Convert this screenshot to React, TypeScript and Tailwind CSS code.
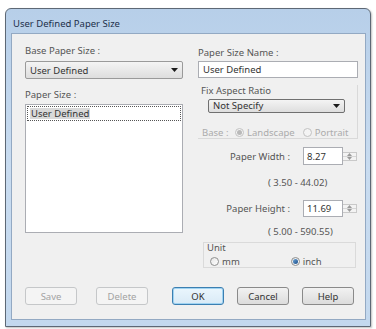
function ComboArrow() {
  return (
    <svg width="7" height="4" viewBox="0 0 7 4" className="shrink-0">
      <path d="M0 0H7L3.5 4Z" fill="#1b1b1b" />
    </svg>
  );
}

function Radio({ checked, disabled }: { checked?: boolean; disabled?: boolean }) {
  return (
    <span
      className={`flex h-[9px] w-[9px] shrink-0 items-center justify-center rounded-full border ${
        disabled ? "border-[#c2c2c2] bg-[#f4f4f4]" : "border-[#8e8f8f] bg-gradient-to-br from-[#e6e6e6] to-white"
      }`}
    >
      {checked && (
        <span
          className={`h-[5px] w-[5px] rounded-full ${
            disabled ? "bg-[#b9b9b9]" : "bg-gradient-to-br from-[#6aa3d6] to-[#1d4f8a]"
          }`}
        />
      )}
    </span>
  );
}

function Spinner() {
  return (
    <div className="flex w-[14px] flex-col border border-l-0 border-[#c9c9c9] bg-[#f3f3f3]">
      <div className="flex flex-1 items-center justify-center border-b border-[#d6d6d6]">
        <svg width="5" height="3" viewBox="0 0 5 3">
          <path d="M0 3L2.5 0L5 3Z" fill="#9a9a9a" />
        </svg>
      </div>
      <div className="flex flex-1 items-center justify-center">
        <svg width="5" height="3" viewBox="0 0 5 3">
          <path d="M0 0H5L2.5 3Z" fill="#9a9a9a" />
        </svg>
      </div>
    </div>
  );
}

function Button({ label, disabled, primary }: { label: string; disabled?: boolean; primary?: boolean }) {
  return (
    <div
      className={`flex h-[18px] w-[52px] items-center justify-center rounded-[3px] border ${
        disabled
          ? "border-[#c5c7c9] bg-[#f4f4f4] text-[#a3a3a3]"
          : primary
            ? "border-[#3c7fb1] bg-gradient-to-b from-[#eaf6fd] to-[#d9eaf6] text-[#333] shadow-[inset_0_0_0_1px_#9fd3f2]"
            : "border-[#8a8a8a] bg-gradient-to-b from-[#f2f2f2] to-[#dcdcdc] text-[#333]"
      }`}
    >
      {label}
    </div>
  );
}

export default function App() {
  return (
    <div className="h-[329px] w-[376px] bg-white font-['Noto_Sans',sans-serif] text-[9.5px] leading-[11px] text-[#555]">
      <div className="pl-[5px] pt-[8px]">
        <div className="flex h-[319px] w-[366px] flex-col rounded-t-[6px] border border-[#5d6875] bg-gradient-to-b from-[#b7cfe9] via-[#c9dcf0] to-[#c3d8ee] pb-[6px] pl-[5px] pr-[4px] shadow-[1px_1px_2px_rgba(0,0,0,0.25)]">
          <div className="flex h-[24px] items-center pl-[2px] pt-[4px] text-[#1c2f4a]">
            User Defined Paper Size
          </div>

          <div className="flex flex-1 flex-col border border-[#93a9c3] bg-[#f0f0f0] pl-[13px] pr-[7px]">
            <div className="flex gap-[15px]">
              {/* left column */}
              <div className="flex w-[158px] flex-col">
                <div className="mt-[11px]">Base Paper Size :</div>
                <div className="mt-[5px] flex h-[18px] items-center justify-between rounded-[2px] border border-[#9a9a9a] bg-gradient-to-b from-[#f4f4f4] to-[#dedede] pl-[4px] pr-[4px] text-[#333]">
                  <span>User Defined</span>
                  <ComboArrow />
                </div>
                <div className="mt-[10px]">Paper Size :</div>
                <div className="mt-[4px] h-[129px] border border-[#abadb3] bg-white px-[1px] pt-[1px]">
                  <div className="flex h-[15px] items-center border border-dotted border-[#555] pl-[2px]">
                    <span className="bg-[#d9d9d9] px-[1px] text-[#333]">User Defined</span>
                  </div>
                </div>
              </div>

              {/* right column */}
              <div className="flex w-[160px] flex-col">
                <div className="mt-[13px]">Paper Size Name :</div>
                <div className="mt-[3px] flex h-[17px] items-center border border-[#abadb3] bg-white pl-[4px] text-[#333]">
                  User Defined
                </div>

                <div className="mt-[7px] flex h-[54px] flex-col border-b border-r border-[#d9d9d9] pl-[10px]">
                  <div className="-ml-[7px]">Fix Aspect Ratio</div>
                  <div className="mt-[3px] flex h-[15px] w-[137px] items-center justify-between rounded-[2px] border border-[#707070] bg-gradient-to-b from-[#f4f4f4] to-[#dedede] pl-[4px] pr-[4px] text-[#333]">
                    <span>Not Specify</span>
                    <ComboArrow />
                  </div>
                  <div className="mt-[14px] flex h-[12px] items-center text-[#ababab]">
                    <span className="-ml-[6px] w-[31px]">Base :</span>
                    <span className="ml-[2px] flex items-center gap-[3px]">
                      <Radio checked disabled />
                      Landscape
                    </span>
                    <span className="ml-[8px] flex items-center gap-[3px]">
                      <Radio disabled />
                      Portrait
                    </span>
                  </div>
                </div>

                <div className="mt-[8px] flex h-[18px] items-center">
                  <span className="w-[92px] text-right">Paper Width :</span>
                  <div className="ml-[13px] flex h-full w-[40px] items-center border border-[#abadb3] bg-white pl-[3px] text-[#333]">
                    8.27
                  </div>
                  <Spinner />
                </div>
                <div className="mt-[12px] pl-[70px]">( 3.50 - 44.02)</div>

                <div className="mt-[12px] flex h-[17px] items-center">
                  <span className="w-[92px] text-right">Paper Height :</span>
                  <div className="ml-[13px] flex h-full w-[40px] items-center border border-[#abadb3] bg-white pl-[3px] text-[#333]">
                    11.69
                  </div>
                  <Spinner />
                </div>
                <div className="mt-[9px] pl-[70px]">( 5.00 - 590.55)</div>

                <div className="ml-[5px] mt-[5px] flex h-[26px] w-[153px] flex-col border border-[#dadada] pl-[3px]">
                  <div className="leading-[10px]">Unit</div>
                  <div className="mt-[3px] flex items-center">
                    <span className="ml-[3px] flex items-center gap-[3px]">
                      <Radio />
                      mm
                    </span>
                    <span className="ml-[51px] flex items-center gap-[3px]">
                      <Radio checked />
                      inch
                    </span>
                  </div>
                </div>
              </div>
            </div>

            <div className="mt-[19px] flex items-center">
              <Button label="Save" disabled />
              <div className="ml-[19px]">
                <Button label="Delete" disabled />
              </div>
              <div className="ml-[24px]">
                <Button label="OK" primary />
              </div>
              <div className="ml-[13px]">
                <Button label="Cancel" />
              </div>
              <div className="ml-[13px]">
                <Button label="Help" />
              </div>
            </div>
          </div>
        </div>
      </div>
    </div>
  );
}
